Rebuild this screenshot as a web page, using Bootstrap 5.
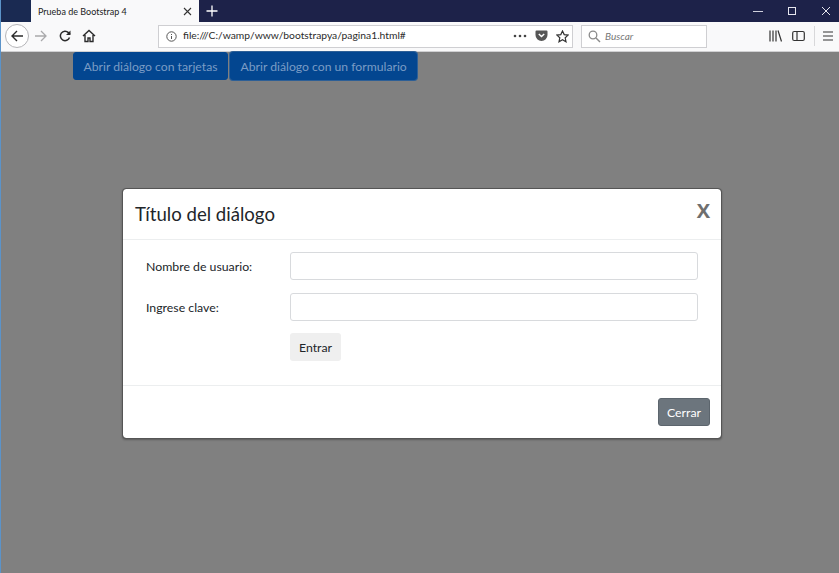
<!DOCTYPE html>
<html lang="es">
<head>
<meta charset="utf-8">
<title>Prueba de Bootstrap 4</title>
<link href="https://cdn.jsdelivr.net/npm/bootstrap@5.3.0/dist/css/bootstrap.min.css" rel="stylesheet">
<style>
html,body{height:100%;overflow:hidden}
body{font-family:Lato,"Open Sans",sans-serif;background:#808080;color:#212529;font-size:12.3px}
.shell{height:573px;width:839px;border-left:1px solid #5b93c9}
.tabbar{height:22px;background:#1d2249;color:#fff}
.tabstub{width:30px;background:#1a2a52}
.tabitem{width:168px;background:#f9f9fa;color:#222;font-size:9px;padding:1px 7px 0}
.tabicon{width:26px}
.winbtn{width:34px}
.winlast{width:30px}
.toolbar{height:30px;background:#f9f9fa;border-bottom:1px solid #d0d0d2;padding-bottom:1px}
.backcircle{width:24px;height:24px;border:1px solid #b5b5b8;border-radius:50%;background:#fff;margin-left:4px}
.toolicon{width:24px;height:24px}
.urlbar{width:415px;height:23px;margin-left:57px;background:#fff;border:1px solid #cfcfd2;color:#2b2b2b;font-size:10.3px;padding:0 3px 0 7px}
.urltext{margin-left:6px}
.searchbar{width:126px;height:23px;margin-left:8px;background:#fff;border:1px solid #cfcfd2;color:#777;font-style:italic;font-size:10px;padding:0 6px}
.sep{width:1px;height:20px;background:#d8d8da}
.rtools{margin-left:auto;padding-right:0}
.libicon{margin-left:2px}
.page{height:521px}
.pagebtns{padding-left:72px;gap:1px}
.dimbtn{background:#034690;color:#7a9cc5;border:1px solid #034690;font-size:12.2px;height:28px;padding:3px 9.5px 0;border-radius:3px;line-height:1}
.dimbtn.focusd{box-shadow:0 0 0 1px #2d5f96;margin-left:1px}
.overlay{inset:0;padding:2px 0 0 4px}
.dialog{width:600px;height:251px;border:1px solid #555;border-radius:4px;box-shadow:0 1px 2px rgba(0,0,0,.3)}
.dialog .modal-header{height:51px;padding:0 12px 0 12px;border-bottom:1px solid #eceeef;flex:none}
.dialog .modal-title{font-size:18.6px;font-weight:400;line-height:1;padding-top:1px}
.closex{font-size:20px;font-weight:700;color:#6f6f6f;font-family:"Open Sans",sans-serif;line-height:1;background:none;border:0;padding:0;margin:-7px -1px 0 0}
.dialog .modal-body{padding:11px 23px 0 23px;height:146px;border-bottom:1px solid #eceeef;flex:none}
.formrow{height:29px;margin-bottom:12px}
.formlab{width:144px;font-size:12.3px;color:#212529;padding-top:4px}
.formin{height:28px;border:1px solid #d8dadd;border-radius:3px;background:#fff;flex:1}
.enterbtn{margin-left:144px;background:#efefef;border:0;border-radius:3px;height:28px;width:51px;font-size:12.3px;color:#212529;padding:3px 0 0}
.dialog .modal-footer{padding:12px 11px;justify-content:flex-end;border:0;flex:1;align-items:flex-start}
.closebtn{background:#6c757d;color:#fff;border:1px solid #5c656d;border-radius:3px;height:28px;width:52px;font-size:12.3px;padding:2px 0 0;margin:0}
</style>
</head>
<body>
<div class="shell d-flex flex-column">
  <div class="tabbar d-flex">
    <div class="tabstub"></div>
    <div class="tabitem d-flex align-items-center justify-content-between">
      <span>Prueba de Bootstrap 4</span>
      <svg width="9" height="9" viewBox="0 0 9 9"><path d="M1 1l7 7M8 1L1 8" stroke="#333" stroke-width="1.1" fill="none"/></svg>
    </div>
    <div class="tabicon d-flex align-items-center justify-content-center">
      <svg width="12" height="12" viewBox="0 0 12 12"><path d="M6 0.5v11M0.5 6h11" stroke="#fff" stroke-width="1.3" fill="none"/></svg>
    </div>
    <div class="flex-grow-1"></div>
    <div class="winbtn d-flex align-items-center justify-content-center">
      <svg width="10" height="10" viewBox="0 0 10 10"><path d="M0 5.5h10" stroke="#cfd0dc" fill="none"/></svg>
    </div>
    <div class="winbtn d-flex align-items-center justify-content-center">
      <svg width="10" height="10" viewBox="0 0 10 10"><rect x="1.5" y="1.5" width="7" height="7" stroke="#e6e6ee" fill="none"/></svg>
    </div>
    <div class="winbtn winlast d-flex align-items-center justify-content-center">
      <svg class="ms-1" width="10" height="10" viewBox="0 0 10 10"><path d="M1 1l8 8M9 1l-8 8" stroke="#e6e6ee" fill="none"/></svg>
    </div>
  </div>
  <div class="toolbar d-flex align-items-center">
    <div class="backcircle d-flex align-items-center justify-content-center">
      <svg width="14" height="14" viewBox="0 0 14 14"><path d="M13 7H2M7 2L2 7l5 5" stroke="#2b2b2b" stroke-width="1.4" fill="none"/></svg>
    </div>
    <div class="toolicon d-flex align-items-center justify-content-center">
      <svg width="14" height="14" viewBox="0 0 14 14"><path d="M1 7h11M7 2l5 5-5 5" stroke="#a9a9ab" stroke-width="1.3" fill="none"/></svg>
    </div>
    <div class="toolicon d-flex align-items-center justify-content-center">
      <svg width="14" height="14" viewBox="0 0 14 14"><path d="M11.5 8.5A4.7 4.7 0 1 1 10.4 3.6L12 5.2" stroke="#2b2b2b" stroke-width="1.5" fill="none"/><path d="M12.5 1.5v4.5H8z" fill="#2b2b2b"/></svg>
    </div>
    <div class="toolicon d-flex align-items-center justify-content-center">
      <svg width="14" height="14" viewBox="0 0 14 14"><path d="M1 7l6-5.5L13 7M3 6v6.5h3v-3.5h2v3.5h3V6" stroke="#2b2b2b" stroke-width="1.4" fill="none"/></svg>
    </div>
    <div class="urlbar d-flex align-items-center">
      <svg width="11" height="11" viewBox="0 0 11 11"><circle cx="5.5" cy="5.5" r="4.7" stroke="#555" fill="none"/><path d="M5.5 5v3M5.5 3v1" stroke="#555" fill="none"/></svg>
      <span class="urltext flex-grow-1">file:///C:/wamp/www/bootstrapya/pagina1.html#</span>
      <svg width="14" height="4" viewBox="0 0 14 4"><circle cx="2" cy="2" r="1.3" fill="#444"/><circle cx="7" cy="2" r="1.3" fill="#444"/><circle cx="12" cy="2" r="1.3" fill="#444"/></svg>
      <svg class="ms-2" width="13" height="12" viewBox="0 0 13 12"><path d="M1.5 0.5h10a1 1 0 0 1 1 1V5a6 6 0 0 1-12 0V1.5a1 1 0 0 1 1-1z" fill="#555"/><path d="M3.8 4l2.7 2.5L9.2 4" stroke="#fff" stroke-width="1.5" fill="none"/></svg>
      <svg class="ms-2" width="13" height="13" viewBox="0 0 13 13"><path d="M6.5 1l1.7 3.6 3.9.5-2.9 2.7.8 3.9-3.5-2-3.5 2 .8-3.9L.9 5.1l3.9-.5z" stroke="#333" stroke-width="1.2" fill="none"/></svg>
    </div>
    <div class="searchbar d-flex align-items-center">
      <svg class="me-1" width="13" height="13" viewBox="0 0 13 13"><circle cx="5" cy="5" r="3.8" stroke="#8a8a8a" stroke-width="1.3" fill="none"/><path d="M8 8l4 4" stroke="#8a8a8a" stroke-width="1.5" fill="none"/></svg>
      <span>Buscar</span>
    </div>
    <div class="rtools d-flex align-items-center">
      <div class="toolicon d-flex align-items-center justify-content-center">
        <svg class="libicon" width="13" height="12" viewBox="0 0 13 12"><path d="M1 0.5v11M4 0.5v11M7 0.5v11M9 0.5l3.5 11" stroke="#333" stroke-width="1.2" fill="none"/></svg>
      </div>
      <div class="toolicon d-flex align-items-center justify-content-center">
        <svg width="13" height="12" viewBox="0 0 13 12"><rect x="0.7" y="1.5" width="11.6" height="9" rx="1.5" stroke="#333" stroke-width="1.2" fill="none"/><path d="M5 1.5v9" stroke="#333" stroke-width="1.2"/></svg>
      </div>
      <div class="sep ms-1"></div>
      <div class="toolicon d-flex align-items-center justify-content-center">
        <svg class="libicon" width="12" height="10" viewBox="0 0 12 10"><path d="M1 1h10M1 5h10M1 9h10" stroke="#333" stroke-width="1.2" fill="none"/></svg>
      </div>
    </div>
  </div>
  <div class="page position-relative">
    <div class="pagebtns d-flex">
      <button class="btn dimbtn" type="button">Abrir diálogo con tarjetas</button>
      <button class="btn dimbtn focusd" type="button">Abrir diálogo con un formulario</button>
    </div>
    <div class="overlay position-absolute d-flex align-items-center justify-content-center">
      <div class="modal-content dialog bg-white d-flex flex-column">
        <div class="modal-header d-flex justify-content-between align-items-center">
          <h5 class="modal-title">Título del diálogo</h5>
          <button class="closex" type="button">X</button>
        </div>
        <div class="modal-body">
          <div class="formrow d-flex align-items-center">
            <label class="formlab">Nombre de usuario:</label>
            <div class="formin"></div>
          </div>
          <div class="formrow d-flex align-items-center">
            <label class="formlab">Ingrese clave:</label>
            <div class="formin"></div>
          </div>
          <button class="enterbtn" type="button">Entrar</button>
        </div>
        <div class="modal-footer d-flex">
          <button class="closebtn" type="button">Cerrar</button>
        </div>
      </div>
    </div>
  </div>
</div>
</body>
</html>
